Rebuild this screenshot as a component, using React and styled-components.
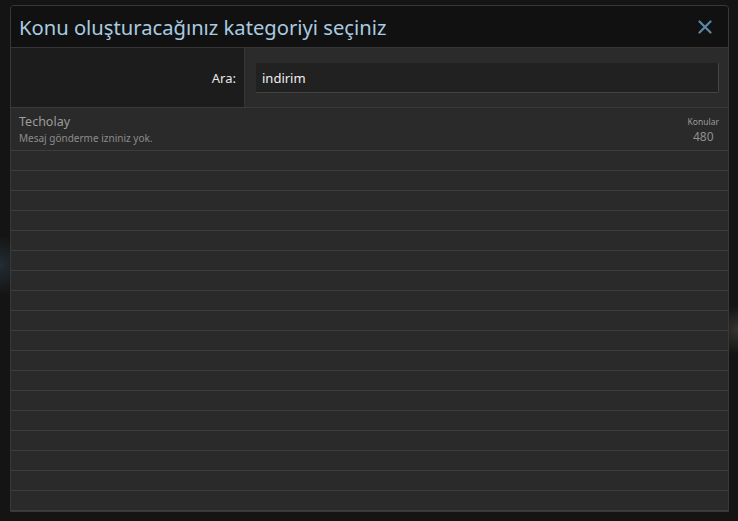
import React from 'react';
import styled, { createGlobalStyle } from 'styled-components';

const GlobalStyle = createGlobalStyle`
  html, body {
    margin: 0;
    padding: 0;
    background: #141414;
  }
  body {
    font-family: "Noto Sans", "Open Sans", sans-serif;
    height: 521px;
    overflow: hidden;
    background:
      radial-gradient(circle at 0px 265px, rgba(60, 90, 110, 0.35), transparent 30px),
      radial-gradient(circle at 738px 330px, rgba(120, 110, 100, 0.35), transparent 25px),
      #141414;
  }
`;

const Page = styled.div`
  padding: 5px 9px 0 10px;
`;

const Modal = styled.div`
  width: 717px;
  border: 1px solid #383838;
  border-radius: 4px 4px 0 0;
  background: #2a2a2a;
  overflow: hidden;
`;

const Header = styled.div`
  display: flex;
  align-items: center;
  justify-content: space-between;
  height: 42px;
  padding: 1px 16px 0 8px;
  box-sizing: border-box;
  background: #111111;
  border-bottom: 1px solid #363636;
`;

const Title = styled.h2`
  margin: 0;
  font-size: 20.2px;
  font-weight: 400;
  color: #a9cbe0;
`;

const Close = styled.button`
  background: none;
  border: none;
  padding: 0;
  display: flex;
  cursor: pointer;
`;

const SearchRow = styled.div`
  display: grid;
  grid-template-columns: 234px 1fr;
  height: 59px;
  border-bottom: 1px solid #3a3a3a;
`;

const LabelCell = styled.div`
  display: flex;
  align-items: center;
  justify-content: flex-end;
  padding-right: 8px;
  background: #1c1c1c;
  border-right: 1px solid #363636;
  color: #e8e8e8;
  font-size: 13px;
`;

const InputCell = styled.div`
  display: flex;
  align-items: center;
  padding: 0 9px 0 10px;
  background: #2b2b2b;
`;

const Input = styled.input`
  width: 100%;
  height: 31px;
  box-sizing: border-box;
  padding: 0 6px;
  background: #212121;
  border: 1px solid #2a2a2a;
  border-right-color: #444;
  border-bottom-color: #444;
  border-radius: 2px;
  color: #f0f0f0;
  font-family: inherit;
  font-size: 13px;
  outline: none;
`;

const List = styled.div`
  display: flex;
  flex-direction: column;
`;

const Row = styled.div`
  display: flex;
  justify-content: space-between;
  align-items: center;
  height: ${p => (p.$tall ? '42px' : '19px')};
  padding: 0 9px 0 8px;
  background: #2a2a2a;
  border-bottom: 1px solid #3d3d3d;
`;

const NodeInfo = styled.div`
  display: flex;
  flex-direction: column;
`;

const NodeTitle = styled.span`
  font-size: 12.5px;
  color: #9c9c9c;
  line-height: 18px;
`;

const NodeDesc = styled.span`
  font-size: 10px;
  color: #8c8c8c;
  line-height: 14px;
`;

const Stat = styled.div`
  display: flex;
  flex-direction: column;
  align-items: center;
  margin-top: 2px;
`;

const StatLabel = styled.span`
  font-size: 8.5px;
  color: #9a9a9a;
  line-height: 13px;
`;

const StatValue = styled.span`
  font-size: 12px;
  color: #8f8f8f;
  line-height: 18px;
`;

const emptyRows = Array.from({ length: 18 });

const App = () => {
  return (
    <>
      <GlobalStyle />
      <Page>
        <Modal>
          <Header>
            <Title>Konu oluşturacağınız kategoriyi seçiniz</Title>
            <Close aria-label="Kapat">
              <svg width="14" height="14" viewBox="0 0 14 14">
                <path d="M1.5 1.5 L12.5 12.5 M12.5 1.5 L1.5 12.5" stroke="#5a88a6" strokeWidth="2.2" strokeLinecap="round" />
              </svg>
            </Close>
          </Header>
          <SearchRow>
            <LabelCell>Ara:</LabelCell>
            <InputCell>
              <Input defaultValue="indirim" />
            </InputCell>
          </SearchRow>
          <List>
            <Row $tall>
              <NodeInfo>
                <NodeTitle>Techolay</NodeTitle>
                <NodeDesc>Mesaj gönderme izniniz yok.</NodeDesc>
              </NodeInfo>
              <Stat>
                <StatLabel>Konular</StatLabel>
                <StatValue>480</StatValue>
              </Stat>
            </Row>
            {emptyRows.map((_, i) => (
              <Row key={i} />
            ))}
          </List>
        </Modal>
      </Page>
    </>
  );
};

export default App;
